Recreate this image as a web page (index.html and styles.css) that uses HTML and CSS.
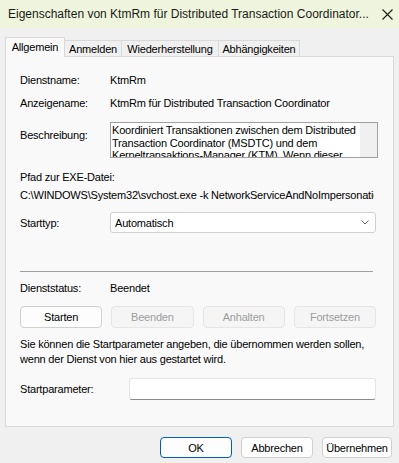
FILE: index.html
```html
<!DOCTYPE html>
<html>
<head>
    <title>Eigenschaften von KtmRm</title>
    <link rel="stylesheet" href="styles.css">
</head>
<body>
    <div class="titlebar">
        <span class="title">Eigenschaften von KtmRm für Distributed Transaction Coordinator...</span>
        <svg class="close" width="11" height="11" viewBox="0 0 11 11">
            <path d="M0.5 0.5 L10.5 10.5 M10.5 0.5 L0.5 10.5" stroke="#1a1a1a" stroke-width="1.1" fill="none"/>
        </svg>
    </div>

    <div class="tabs">
        <div class="tab active">Allgemein</div>
        <div class="tab tab-anm">Anmelden</div>
        <div class="tab tab-wie">Wiederherstellung</div>
        <div class="tab tab-abh">Abhängigkeiten</div>
    </div>

    <div class="panel">
        <div class="row r-name">
            <span class="label">Dienstname:</span>
            <span>KtmRm</span>
        </div>
        <div class="row r-anz">
            <span class="label">Anzeigename:</span>
            <span>KtmRm für Distributed Transaction Coordinator</span>
        </div>
        <div class="row r-desc">
            <span class="label desc-label">Beschreibung:</span>
            <div class="desc-box">
                <div class="desc-text">Koordiniert Transaktionen zwischen dem Distributed Transaction Coordinator (MSDTC) und dem Kerneltransaktions-Manager (KTM). Wenn dieser Dienst nicht benötigt wird, wird empfohlen, ihn zu deaktivieren.</div>
                <div class="desc-scroll"></div>
            </div>
        </div>
        <div class="r-pfad">Pfad zur EXE-Datei:</div>
        <div class="r-path">C:\WINDOWS\System32\svchost.exe -k NetworkServiceAndNoImpersonation -p</div>
        <div class="row r-start">
            <span class="label">Starttyp:</span>
            <div class="select">
                <span>Automatisch</span>
                <svg width="8" height="5" viewBox="0 0 8 5">
                    <path d="M0.5 0.5 L4 4 L7.5 0.5" stroke="#6a6a6a" stroke-width="1" fill="none"/>
                </svg>
            </div>
        </div>
        <div class="separator"></div>
        <div class="row r-status">
            <span class="label">Dienststatus:</span>
            <span>Beendet</span>
        </div>
        <div class="svc-buttons">
            <div class="btn">Starten</div>
            <div class="btn disabled">Beenden</div>
            <div class="btn disabled">Anhalten</div>
            <div class="btn disabled">Fortsetzen</div>
        </div>
        <p class="hint">Sie können die Startparameter angeben, die übernommen werden sollen,<br>wenn der Dienst von hier aus gestartet wird.</p>
        <div class="row r-param">
            <span class="label param-label">Startparameter:</span>
            <div class="input"></div>
        </div>
    </div>

    <div class="footer">
        <div class="btn fbtn ok">OK</div>
        <div class="btn fbtn">Abbrechen</div>
        <div class="btn fbtn apply">Übernehmen</div>
    </div>
</body>
</html>
```

FILE: styles.css
```css
body {
    margin: 0;
    padding: 0;
    width: 399px;
    height: 463px;
    overflow: hidden;
    background-color: #f0f0f0;
    font-family: "Liberation Sans", Arial, sans-serif;
    font-size: 11px;
    letter-spacing: -0.2px;
    color: #000;
}

.titlebar {
    height: 28px;
    background-color: #eef5dc;
    display: flex;
    align-items: center;
    justify-content: space-between;
    padding: 0 6px 0 8px;
}

.title {
    font-size: 12px;
    letter-spacing: 0;
    white-space: nowrap;
    color: #1a1a1a;
}

.close {
    margin-top: 1px;
}

.tabs {
    display: flex;
    align-items: flex-end;
    margin: 9px 0 0 5px;
    height: 19px;
    position: relative;
    z-index: 1;
}

.tab {
    height: 16px;
    line-height: 16px;
    background-color: #f0f0f0;
    border: 1px solid #d9d9d9;
    border-bottom: none;
    border-left: none;
    text-align: center;
    box-sizing: border-box;
}

.tab.active {
    height: 20px;
    line-height: 19px;
    width: 60px;
    background-color: #f9f9f9;
    border-left: 1px solid #d9d9d9;
    margin-bottom: -1px;
}

.tab-anm { width: 57px; }
.tab-wie { width: 97px; }
.tab-abh { width: 81px; }

.panel {
    margin: 0 5px;
    height: 354px;
    border: 1px solid #d9d9d9;
    background-color: #f9f9f9;
    padding: 15px 0 0 14px;
    width: 373px;
}

.row {
    display: flex;
    align-items: center;
}

.label {
    width: 90px;
    flex-shrink: 0;
    line-height: 16px;
}

.r-name { height: 16px; }
.r-anz { height: 16px; margin-top: 7px; }

.r-desc {
    margin-top: 11px;
    align-items: flex-start;
}

.desc-label {
    margin-top: 5px;
}

.desc-box {
    width: 266px;
    height: 34px;
    border: 1px solid #a0a0a0;
    background-color: #fff;
    display: flex;
    overflow: hidden;
}

.desc-text {
    flex: 1;
    padding: 1px 0 0 1px;
    line-height: 12.5px;
}

.desc-scroll {
    width: 17px;
    background-color: #f0f0f0;
}

.r-pfad {
    margin-top: 11px;
    line-height: 16px;
}

.r-path {
    margin-top: 2px;
    line-height: 16px;
    width: 354px;
    white-space: nowrap;
    overflow: hidden;
}

.r-start {
    margin-top: 9px;
}

.select {
    width: 266px;
    height: 21px;
    box-sizing: border-box;
    border: 1px solid #d0d0d0;
    border-radius: 3px;
    background-color: #fff;
    display: flex;
    align-items: center;
    justify-content: space-between;
    padding: 0 6px 0 4px;
}

.separator {
    width: 353px;
    height: 1px;
    background-color: #a0a0a0;
    margin-top: 38px;
}

.r-status {
    margin-top: 8px;
    height: 16px;
}

.svc-buttons {
    display: flex;
    gap: 9px;
    margin-top: 10px;
    width: 356px;
}

.btn {
    height: 22px;
    box-sizing: border-box;
    border: 1px solid #d0d0d0;
    border-radius: 4px;
    background-color: #fdfdfd;
    display: flex;
    align-items: center;
    justify-content: center;
}

.svc-buttons .btn {
    flex: 1;
}

.btn.disabled {
    color: #9d9d9d;
    background-color: #f5f5f5;
    border-color: #e5e5e5;
}

.hint {
    margin: 9px 0 0 0;
    line-height: 15px;
}

.r-param {
    margin-top: 11px;
}

.param-label {
    width: 109px;
}

.input {
    width: 247px;
    height: 22px;
    box-sizing: border-box;
    background-color: #fff;
    border: 1px solid #e5e5e5;
    border-bottom-color: #8a8a8a;
    border-radius: 3px;
}

.footer {
    display: flex;
    justify-content: flex-end;
    gap: 9px;
    margin: 10px 7px 0 0;
}

.fbtn {
    width: 72px;
    height: 21px;
}

.fbtn.ok {
    border-color: #005fb8;
}

.fbtn.apply {
    width: 70px;
}
```
